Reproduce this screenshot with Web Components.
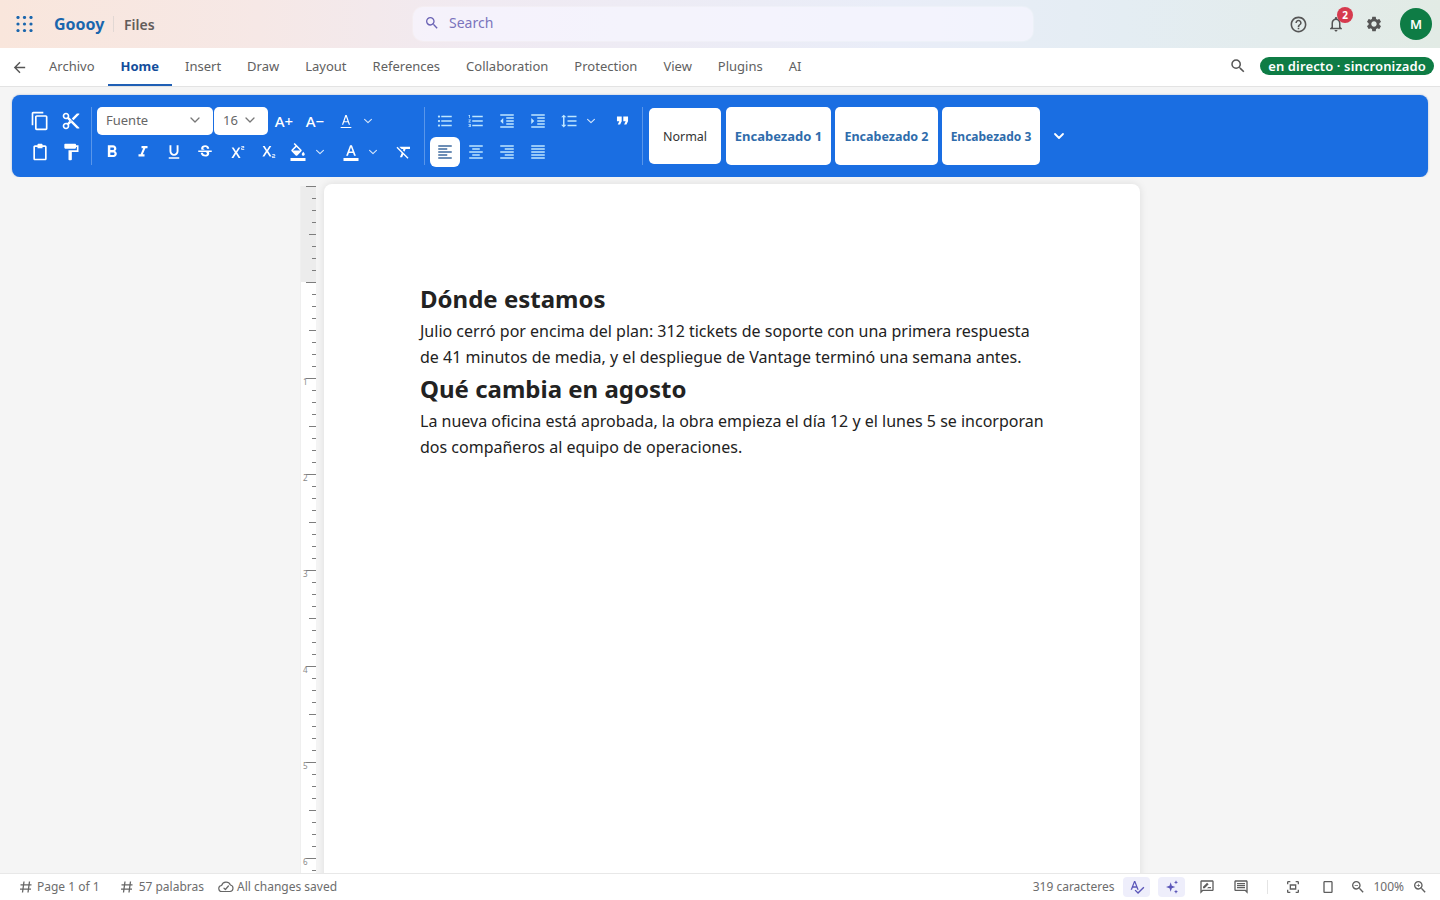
<!DOCTYPE html>
<html lang="es">
<head>
<meta charset="utf-8">
<title>Goooy Files</title>
<style>
html,body{margin:0;height:100%;overflow:hidden}
body{font-family:"Noto Sans","Open Sans",sans-serif;background:#f5f5f5;color:#222}
app-shell{height:900px}
</style>
</head>
<body>
<app-shell>
  <top-bar slot="top"></top-bar>
  <tab-bar slot="top"></tab-bar>
  <format-ribbon slot="top"></format-ribbon>
  <doc-ruler slot="ruler"></doc-ruler>
  <doc-page slot="page">
    <h1>Dónde estamos</h1>
    <p>Julio cerró por encima del plan: 312 tickets de soporte con una primera respuesta de 41 minutos de media, y el despliegue de Vantage terminó una semana antes.</p>
    <h1>Qué cambia en agosto</h1>
    <p>La nueva oficina está aprobada, la obra empieza el día 12 y el lunes 5 se incorporan dos compañeros al equipo de operaciones.</p>
  </doc-page>
  <status-bar slot="bottom"></status-bar>
</app-shell>
<script>
const P={
search:'M15.5 14h-.79l-.28-.27A6.471 6.471 0 0 0 16 9.5 6.5 6.5 0 1 0 9.5 16c1.61 0 3.09-.59 4.23-1.57l.27.28v.79l5 4.99L20.49 19l-4.99-5zm-6 0C7.01 14 5 11.99 5 9.5S7.01 5 9.5 5 14 7.01 14 9.5 11.99 14 9.5 14z',
help:'M11 18h2v-2h-2v2zm1-16C6.48 2 2 6.48 2 12s4.48 10 10 10 10-4.48 10-10S17.52 2 12 2zm0 18c-4.41 0-8-3.59-8-8s3.59-8 8-8 8 3.59 8 8-3.59 8-8 8zm0-14c-2.21 0-4 1.79-4 4h2c0-1.1.9-2 2-2s2 .9 2 2c0 2-3 1.75-3 5h2c0-2.25 3-2.5 3-5 0-2.21-1.79-4-4-4z',
bell:'M12 22c1.1 0 2-.9 2-2h-4c0 1.1.9 2 2 2zm6-6v-5c0-3.07-1.63-5.64-4.5-6.32V4c0-.83-.67-1.5-1.5-1.5s-1.5.67-1.5 1.5v.68C7.64 5.36 6 7.92 6 11v5l-2 2v1h16v-1l-2-2zm-2 1H8v-6c0-2.48 1.51-4.5 4-4.5s4 2.02 4 4.5v6z',
gear:'M19.14 12.94c.04-.3.06-.61.06-.94 0-.32-.02-.64-.07-.94l2.03-1.58c.18-.14.23-.41.12-.61l-1.92-3.32c-.12-.22-.37-.29-.59-.22l-2.39.96c-.5-.38-1.03-.7-1.62-.94l-.36-2.54c-.04-.24-.24-.41-.48-.41h-3.84c-.24 0-.43.17-.47.41l-.36 2.54c-.59.24-1.13.57-1.62.94l-2.39-.96c-.22-.08-.47 0-.59.22L2.74 8.87c-.12.21-.08.47.12.61l2.03 1.58c-.05.3-.09.63-.09.94s.02.64.07.94l-2.03 1.58c-.18.14-.23.41-.12.61l1.92 3.32c.12.22.37.29.59.22l2.39-.96c.5.38 1.03.7 1.62.94l.36 2.54c.05.24.24.41.48.41h3.84c.24 0 .44-.17.47-.41l.36-2.54c.59-.24 1.13-.56 1.62-.94l2.39.96c.22.08.47 0 .59-.22l1.92-3.32c.12-.22.07-.47-.12-.61l-2.01-1.58zM12 15.6c-1.98 0-3.6-1.62-3.6-3.6s1.62-3.6 3.6-3.6 3.6 1.62 3.6 3.6-1.62 3.6-3.6 3.6z',
back:'M20 11H7.83l5.59-5.59L12 4l-8 8 8 8 1.41-1.41L7.83 13H20v-2z',
copy:'M16 1H4c-1.1 0-2 .9-2 2v14h2V3h12V1zm3 4H8c-1.1 0-2 .9-2 2v14c0 1.1.9 2 2 2h11c1.1 0 2-.9 2-2V7c0-1.1-.9-2-2-2zm0 16H8V7h11v14z',
cut:'M9.64 7.64c.23-.5.36-1.05.36-1.64 0-2.21-1.79-4-4-4S2 3.79 2 6s1.79 4 4 4c.59 0 1.14-.13 1.64-.36L10 12l-2.36 2.36C7.14 14.13 6.59 14 6 14c-2.21 0-4 1.79-4 4s1.79 4 4 4 4-1.79 4-4c0-.59-.13-1.14-.36-1.64L12 14l7 7h3v-1L9.64 7.64zM6 8c-1.1 0-2-.89-2-2s.9-2 2-2 2 .89 2 2-.9 2-2 2zm0 12c-1.1 0-2-.89-2-2s.9-2 2-2 2 .89 2 2-.9 2-2 2zm6-7.5c-.28 0-.5-.22-.5-.5s.22-.5.5-.5.5.22.5.5-.22.5-.5.5zM19 3l-6 6 2 2 7-7V3h-3z',
paste:'M6 4h3V3c0-.6.4-1 1-1h4c.6 0 1 .4 1 1v1h3c1.1 0 2 .9 2 2v14c0 1.1-.9 2-2 2H6c-1.1 0-2-.9-2-2V6c0-1.1.9-2 2-2zm0 2v14h12V6h-3v1.5H9V6H6z',
paint:'M18 4V3c0-.55-.45-1-1-1H5c-.55 0-1 .45-1 1v4c0 .55.45 1 1 1h12c.55 0 1-.45 1-1V6h1v4H9v11c0 .55.45 1 1 1h2c.55 0 1-.45 1-1v-9h8V4h-3z',
bold:'M15.6 10.79c.97-.67 1.65-1.77 1.65-2.79 0-2.26-1.75-4-4-4H7v14h7.04c2.09 0 3.71-1.7 3.71-3.79 0-1.52-.86-2.82-2.15-3.42zM10 6.5h3c.83 0 1.5.67 1.5 1.5s-.67 1.5-1.5 1.5h-3v-3zm3.5 9H10v-3h3.5c.83 0 1.5.67 1.5 1.5s-.67 1.5-1.5 1.5z',
italic:'M10 4v3h2.21l-3.42 8H6v3h8v-3h-2.21l3.42-8H18V4z',
under:'M12 17c3.31 0 6-2.69 6-6V3h-2.5v8c0 1.93-1.57 3.5-3.5 3.5S8.5 12.93 8.5 11V3H6v8c0 3.31 2.69 6 6 6zm-7 2v2h14v-2H5z',
strike:'M6.85 7.08C6.85 4.37 9.45 3 12.24 3c1.64 0 3 .49 3.9 1.28.77.65 1.46 1.73 1.46 3.24h-3.01c0-.31-.05-.59-.15-.85-.29-.86-1.2-1.28-2.25-1.28-1.86 0-2.34 1.02-2.34 1.7 0 .48.25.88.74 1.21.38.25.77.48 1.41.7H7.39c-.21-.34-.54-.89-.54-1.92zM21 12v-2H3v2h9.62c1.15.45 1.96.75 1.96 1.97 0 1-.81 1.67-2.28 1.67-1.54 0-2.93-.54-2.93-2.51H6.4c0 .55.08 1.13.24 1.58.81 2.29 3.29 3.3 5.67 3.3 2.27 0 5.3-.89 5.3-4.05 0-.3-.01-1.16-.48-1.96H21z',
sup:'M22 7h-2v1h3v1h-4V7c0-.55.45-1 1-1h2V5h-3V4h3c.55 0 1 .45 1 1v1c0 .55-.45 1-1 1zM5.88 20h2.66l3.4-5.42h.12l3.4 5.42h2.66l-4.65-7.27L17.81 6h-2.68l-3.07 4.99h-.12L8.85 6H6.19l4.32 6.73L5.88 20z',
sub:'M22 18h-2v1h3v1h-4v-2c0-.55.45-1 1-1h2v-1h-3v-1h3c.55 0 1 .45 1 1v1c0 .55-.45 1-1 1zM5.88 18h2.66l3.4-5.42h.12l3.4 5.42h2.66l-4.65-7.27L17.81 4h-2.68l-3.07 4.99h-.12L8.85 4H6.19l4.32 6.73L5.88 18z',
color:'M2 20h20v4H2v-4zm3.49-3h2.42l1.27-3.58h5.65L16.09 17h2.42L13.25 3h-2.5L5.49 17zm4.42-5.61 2.03-5.79h.12l2.03 5.79H9.91z',
colorThin:'M4 21h16v1.6H4V21zm1.9-3.5h1.9l1.3-3.6h5.8l1.3 3.6h1.9L13 3h-2L5.9 17.5zm3.8-5.3L12 5.6l2.3 6.6H9.7z',
fill:'M16.56 8.94 7.62 0 6.21 1.41l2.38 2.38-5.15 5.15c-.59.59-.59 1.54 0 2.12l5.5 5.5c.29.29.68.44 1.06.44s.77-.15 1.06-.44l5.5-5.5c.59-.58.59-1.53 0-2.12zM5.21 10 10 5.21 14.79 10H5.21zM19 11.5s-2 2.17-2 3.5c0 1.1.9 2 2 2s2-.9 2-2c0-1.33-2-3.5-2-3.5zM2 20h20v4H2v-4z',
clear:'M3.27 5 2 6.27l6.97 6.97L6.5 19h3l1.57-3.66L16.73 21 18 19.73 3.55 5.27 3.27 5zM6 5v.18L8.82 8h2.4l-.72 1.68 2.1 2.1L14.21 8H20V5H6z',
bul:'M4 10.5c-.83 0-1.5.67-1.5 1.5s.67 1.5 1.5 1.5 1.5-.67 1.5-1.5-.67-1.5-1.5-1.5zm0-6c-.83 0-1.5.67-1.5 1.5S3.17 7.5 4 7.5 5.5 6.83 5.5 6 4.83 4.5 4 4.5zm0 12c-.83 0-1.5.68-1.5 1.5s.68 1.5 1.5 1.5 1.5-.68 1.5-1.5-.67-1.5-1.5-1.5zM7 19h14v-2H7v2zm0-6h14v-2H7v2zm0-8v2h14V5H7z',
num:'M2 17h2v.5H3v1h1v.5H2v1h3v-4H2v1zm1-9h1V4H2v1h1v3zm-1 3h1.8L2 13.1v.9h3v-1H3.2L5 10.9V10H2v1zm5-6v2h14V5H7zm0 14h14v-2H7v2zm0-6h14v-2H7v2z',
indL:'M11 17h10v-2H11v2zm-8-5 4 4V8l-4 4zm0 9h18v-2H3v2zM3 3v2h18V3H3zm8 6h10V7H11v2zm0 4h10v-2H11v2z',
indR:'M3 21h18v-2H3v2zM3 8v8l4-4-4-4zm8 9h10v-2H11v2zM3 3v2h18V3H3zm8 6h10V7H11v2zm0 4h10v-2H11v2z',
line:'M6 7h2.5L5 3.5 1.5 7H4v10H1.5L5 20.5 8.5 17H6V7zm4-2v2h12V5H10zm0 14h12v-2H10v2zm0-6h12v-2H10v2z',
quote:'M6 17h3l2-4V7H5v6h3zm8 0h3l2-4V7h-6v6h3z',
aL:'M15 15H3v2h12v-2zm0-8H3v2h12V7zM3 13h18v-2H3v2zm0 8h18v-2H3v2zM3 3v2h18V3H3z',
aC:'M7 15v2h10v-2H7zm-4 6h18v-2H3v2zm0-8h18v-2H3v2zm4-6v2h10V7H7zM3 3v2h18V3H3z',
aR:'M3 21h18v-2H3v2zm6-4h12v-2H9v2zm-6-4h18v-2H3v2zm6-4h12V7H9v2zM3 3v2h18V3H3z',
aJ:'M3 21h18v-2H3v2zm0-4h18v-2H3v2zm0-4h18v-2H3v2zm0-4h18V7H3v2zm0-6v2h18V3H3z',
spell:'M12.45 16h2.09L9.43 3H7.57L2.46 16h2.09l1.12-3h5.64l1.14 3zm-6.02-5L8.5 5.48 10.57 11H6.43zm15.16.59-8.09 8.09L9.83 16l-1.41 1.41 5.09 5.09L23 13l-1.41-1.41z',
spark:'M10 5l1.7 5.3L17 12l-5.3 1.7L10 19l-1.7-5.3L3 12l5.3-1.7zM18 2l.9 2.1L21 5l-2.1.9L18 8l-.9-2.1L15 5l2.1-.9zM18 16l.9 2.1 2.1.9-2.1.9L18 22l-.9-2.1L15 19l2.1-.9z',
review:'M20 2H4c-1.1 0-2 .9-2 2v18l4-4h14c1.1 0 2-.9 2-2V4c0-1.1-.9-2-2-2zm0 14H5.2L4 17.2V4h16v12zM6 14h2.5l6-6-2.4-2.4-6.1 6V14zm6 0h6v-2h-4z',
comment:'M21.99 4c0-1.1-.89-2-1.99-2H4c-1.1 0-2 .9-2 2v12c0 1.1.9 2 2 2h14l4 4-.01-18zM20 4v13.17L18.83 16H4V4h16zM6 12h12v2H6zm0-3h12v2H6zm0-3h12v2H6z',
fit:'M3 8V5c0-1.1.9-2 2-2h3v2H5v3H3zm13-5h3c1.1 0 2 .9 2 2v3h-2V5h-3V3zM3 16h2v3h3v2H5c-1.1 0-2-.9-2-2v-3zm16 0h2v3c0 1.1-.9 2-2 2h-3v-2h3v-3zM7 8h10v8H7V8zm2 2v4h6v-4H9z',
page:'M7 3h10c1.1 0 2 .9 2 2v14c0 1.1-.9 2-2 2H7c-1.1 0-2-.9-2-2V5c0-1.1.9-2 2-2zm0 2v14h10V5H7z',
zoomOut:'M15.5 14h-.79l-.28-.27A6.471 6.471 0 0 0 16 9.5 6.5 6.5 0 1 0 9.5 16c1.61 0 3.09-.59 4.23-1.57l.27.28v.79l5 4.99L20.49 19l-4.99-5zm-6 0C7.01 14 5 11.99 5 9.5S7.01 5 9.5 5 14 7.01 14 9.5 11.99 14 9.5 14zM7 9h5v1H7z',
zoomIn:'M15.5 14h-.79l-.28-.27A6.471 6.471 0 0 0 16 9.5 6.5 6.5 0 1 0 9.5 16c1.61 0 3.09-.59 4.23-1.57l.27.28v.79l5 4.99L20.49 19l-4.99-5zm-6 0C7.01 14 5 11.99 5 9.5S7.01 5 9.5 5 14 7.01 14 9.5 11.99 14 9.5 14zM12 10h-2v2H9v-2H7V9h2V7h1v2h2v1z'
};
const ico=(n,s=20,c='currentColor')=>`<svg width="${s}" height="${s}" viewBox="0 0 24 24" fill="${c}" style="display:block;flex:none"><path d="${P[n]}"/></svg>`;
const chev=(s=14,c='currentColor',w=1.6)=>`<svg width="${s}" height="${s}" viewBox="0 0 14 14" fill="none" stroke="${c}" stroke-width="${w}" stroke-linecap="round" stroke-linejoin="round" style="display:block;flex:none"><path d="M3 5l4 4 4-4"/></svg>`;
const base=':host{display:block;box-sizing:border-box;font-family:"Noto Sans","Open Sans",sans-serif}*{box-sizing:border-box}';
class Base extends HTMLElement{
  constructor(){super();this.attachShadow({mode:'open'}).innerHTML='<style>'+base+this.css()+'</style>'+this.html();}
  css(){return ''} html(){return ''}
}
customElements.define('app-shell',class extends Base{
  css(){return ':host{display:flex;flex-direction:column;height:900px;overflow:hidden}.main{flex:1;min-height:0;overflow:hidden;display:flex;justify-content:center;align-items:flex-start;gap:8px;padding-top:7px;background:#f5f5f5}.bottom{flex:none}'}
  html(){return '<slot name="top"></slot><div class="main"><slot name="ruler"></slot><slot name="page"></slot></div><div class="bottom"><slot name="bottom"></slot></div>'}
});
customElements.define('top-bar',class extends Base{
  css(){return `:host{height:48px;background:linear-gradient(90deg,#f9e6dc 0%,#f6e8e6 18%,#f0eaf2 34%,#e9edf8 62%,#e4edf3 78%,#e2ebe5 100%)}
  .r{display:flex;align-items:center;height:48px;padding-left:16px}
  .brand{font-size:16px;font-weight:700;color:#1a66ad;margin-left:21px;width:59px;line-height:48px}
  .div{width:1px;height:16px;background:#e2d8d4}
  .files{font-size:14px;font-weight:600;color:#625c5a;margin-left:10px;width:289px}
  .search{width:620px;height:34px;border-radius:10px;background:rgba(247,245,255,.72);box-shadow:0 0 2px rgba(255,255,255,.8);display:flex;align-items:center;gap:9px;padding:0 0 3px 11px;color:#6a62b4;font-size:14px}
  .search span{color:#7b74bd}
  .right{margin-left:auto;display:flex;align-items:center;padding-right:8px;color:#555}
  .ib{width:38px;height:38px;display:flex;align-items:center;justify-content:center;position:relative}
  .badge{position:absolute;left:20px;top:2px;width:16px;height:16px;border-radius:50%;background:#d63a4e;color:#fff;font-size:10px;font-weight:700;display:flex;align-items:center;justify-content:center}
  .av{width:32px;height:32px;border-radius:50%;background:#0e7c45;color:#fff;font-size:13px;font-weight:600;display:flex;align-items:center;justify-content:center;margin-left:7px}`}
  html(){
    let d='';for(let y of [1.5,8,14.5])for(let x of [1.5,8,14.5])d+=`<circle cx="${x}" cy="${y}" r="1.6"/>`;
    return `<div class="r"><svg width="17" height="16" viewBox="0 0 16 16" fill="#1a66ad">${d}</svg><span class="brand">Goooy</span><span class="div"></span><span class="files">Files</span>
    <div class="search">${ico('search',16)}<span>Search</span></div>
    <div class="right"><div class="ib">${ico('help',19)}</div><div class="ib">${ico('bell',18)}<span class="badge">2</span></div><div class="ib">${ico('gear',18)}</div><div class="av">M</div></div></div>`}
});
customElements.define('tab-bar',class extends Base{
  css(){return `:host{height:39px;background:#fff;border-bottom:1px solid #e3e3e3}
  .r{display:flex;align-items:stretch;height:38px}
  .bk{width:36px;display:flex;align-items:center;justify-content:center;padding-left:3px;color:#555}
  .t{padding:0 13px;font-size:13px;line-height:37px;color:#616161;position:relative;white-space:nowrap}
  .t.on{color:#124d9b;font-weight:700}
  .t.on::after{content:"";position:absolute;left:0;right:0;bottom:0;height:2px;background:#1f5fb5}
  .end{margin-left:auto;display:flex;align-items:center;padding:0 6px 2px 0;color:#555}
  .pill{margin-left:13px;height:18px;border-radius:9px;background:#0e7c45;color:#fff;font-size:13px;font-weight:600;letter-spacing:.13px;line-height:18px;padding:0 8px;white-space:nowrap}`}
  html(){const tabs=['Archivo','Home','Insert','Draw','Layout','References','Collaboration','Protection','View','Plugins','AI'];
    return `<div class="r"><div class="bk">${ico('back',17)}</div>${tabs.map(t=>`<span class="t${t=='Home'?' on':''}">${t}</span>`).join('')}<div class="end">${ico('search',18)}<span class="pill">en directo · sincronizado</span></div></div>`}
});
customElements.define('rb-btn',class extends Base{
  css(){return ':host{display:flex;width:30px;height:30px;align-items:center;justify-content:center;flex:none;color:#fff;border-radius:6px}:host([active]){background:#fff;color:#3e6a9e}:host([soft]){color:#bfe6ff}:host([sm]){width:12px}:host(.txt){font-size:15px;font-weight:500}'}
  html(){return '<slot></slot>'}
  connectedCallback(){const n=this.getAttribute('i');if(n&&!this.dataset.d){this.dataset.d=1;this.shadowRoot.appendChild(document.createRange().createContextualFragment(ico(n,+this.getAttribute('s')||18)));}}
});
customElements.define('rb-select',class extends Base{
  css(){return ':host{display:flex;align-items:center;justify-content:space-between;height:28px;background:#fff;border-radius:5px;color:#666;font-size:13px;padding:0 11px 1px 9px;flex:none}'}
  html(){return `<slot></slot>${chev(14,'#777',1.3)}`}
});
customElements.define('style-chip',class extends Base{
  css(){return ':host{display:flex;align-items:center;justify-content:center;height:58px;background:#fff;border-radius:5px;color:#2f6cab;font-size:12.5px;font-weight:700;flex:none;white-space:nowrap}:host([plain]){height:56px;color:#333;font-weight:400;font-size:12.5px}'}
  html(){return '<slot></slot>'}
});
customElements.define('format-ribbon',class extends Base{
  css(){return `:host{height:82px;margin:8px 12px 0;background:#1a6ee2;border-radius:8px;box-shadow:0 0 2px rgba(30,80,160,.4)}
  .r{display:flex;align-items:center;height:82px;padding-left:13px}
  .g{display:flex;flex-direction:column;gap:1px}
  .row{display:flex;gap:1px;align-items:center;height:30px}
  .d{width:1px;height:58px;background:rgba(255,255,255,.28);flex:none;margin:0 5px}
  .st{display:flex;align-items:center;margin-left:1px}
  .tx{color:#fff;font-size:15px;font-weight:500;line-height:30px}
  `}
  html(){const b=(i,x='',s=18)=>`<rb-btn i="${i}" s="${s}" ${x}></rb-btn>`;
    const c=(x='')=>`<rb-btn sm style="color:#d5e6fb">${chev(12,'currentColor',1.3)}</rb-btn>`;
    return `<div class="r">
    <div class="g"><div class="row">${b('copy','',20)}${b('cut','',20)}</div><div class="row">${b('paste','',20)}${b('paint','',20)}</div></div>
    <div class="d"></div>
    <div class="g">
      <div class="row"><rb-select style="width:116px">Fuente</rb-select><rb-select style="width:54px">16</rb-select>
        <rb-btn class="txt"><span class="tx">A+</span></rb-btn><rb-btn class="txt"><span class="tx">A−</span></rb-btn>${b('colorThin','',16)}${c()}</div>
      <div class="row">${b('bold','',20)}${b('italic','',18)}${b('under','',18)}${b('strike','',18)}${b('sup','',18)}${b('sub','',18)}${b('fill','',18)}${c()}<span style="width:8px"></span>${b('color','',18)}${c()}<span style="width:8px"></span>${b('clear','',18)}</div>
    </div>
    <div class="d"></div>
    <div class="g">
      <div class="row">${b('bul','soft',18)}${b('num','soft',18)}${b('indL','soft',18)}${b('indR','soft',18)}${b('line','soft',18)}${c()}<span style="width:8px"></span>${b('quote','',19)}</div>
      <div class="row">${b('aL','active',18)}${b('aC','soft',18)}${b('aR','soft',18)}${b('aJ','soft',18)}</div>
    </div>
    <div class="d"></div>
    <div class="st" style="gap:5px"><style-chip plain style="width:72px">Normal</style-chip><style-chip style="width:105px;font-size:13px">Encabezado 1</style-chip><style-chip style="width:103px;margin-left:-1px">Encabezado 2</style-chip><style-chip style="width:98px;margin-left:-1px;font-size:12px">Encabezado 3</style-chip></div>
    <rb-btn style="margin-left:4px">${chev(14,'#fff',1.8)}</rb-btn>
    </div>`}
});
customElements.define('doc-ruler',class extends Base{
  css(){return ':host{width:15px;height:700px;flex:none;background:#fff;margin:2px 0 0 1px;box-shadow:-1px 0 0 #efefef}svg{display:block}'}
  html(){let s='';
    s+='<rect x="0" y="0" width="15" height="96" fill="#ececec"/>';
    for(let i=0;i<59;i++){const y=i*12+.5;const m=i%8==0?10:(i%4==0?7:4);s+=`<line x1="${15-m}" x2="15" y1="${y}" y2="${y}" stroke="#7d7d7d"/>`;
      if(i%8==0&&i>=16){s+=`<text x="2" y="${y+6}" font-size="8" fill="#888" font-family="Noto Sans">${i/8-1}</text>`;}}
    return `<svg width="15" height="700" viewBox="0 0 15 700">${s}</svg>`}
});
customElements.define('doc-page',class extends Base{
  css(){return `:host{width:816px;height:800px;flex:none;background:#fff;border-radius:8px 8px 0 0;padding:96px;box-shadow:0 0 8px rgba(0,0,0,.1);color:#222}
  ::slotted(h1){margin:0;font-size:24px;line-height:38px;font-weight:700;color:#222}
  ::slotted(p){margin:0;font-size:16px;line-height:26px;color:#222}`}
  html(){return '<slot></slot>'}
});
customElements.define('status-bar',class extends Base{
  css(){return `:host{height:27px;background:#fff;border-top:1px solid #e8e8e8;color:#6d6d6d;font-size:12px}
  .r{display:flex;align-items:center;height:26px;padding:0 12px 1px 19px;white-space:nowrap}
  .i{display:flex;align-items:center;gap:5px}
  .s{margin-left:auto}
  .hb{width:27px;height:20px;border-radius:4px;background:#eeeefb;color:#5a55b8;display:flex;align-items:center;justify-content:center}
  .ic{display:flex;align-items:center;justify-content:center;width:16px;color:#5f5f5f}
  .dv{width:1px;height:14px;background:#e4e4e4}`}
  html(){const h='<svg width="14" height="14" viewBox="0 0 14 14" fill="none" stroke="#666" stroke-width="1.3" style="display:block;flex:none"><path d="M5 1.5 3.5 12.5M10.5 1.5 9 12.5M1.5 4.8h11M1 9.2h11"/></svg>';
    const cloud='<svg width="16" height="14" viewBox="0 0 16 14" fill="none" stroke="#666" stroke-width="1.2" stroke-linecap="round" stroke-linejoin="round" style="display:block;flex:none"><path d="M4 11.5a3 3 0 0 1-.4-6A4.7 4.7 0 0 1 12.4 5a3.3 3.3 0 0 1-.4 6.5z"/><path d="M6 8.2l1.4 1.3L10.4 6"/></svg>';
    return `<div class="r"><span class="i" style="gap:4px">${h}<span>Page 1 of 1</span></span><span class="i" style="margin-left:20px">${h}<span>57 palabras</span></span><span class="i" style="margin-left:14px;gap:3px">${cloud}<span>All changes saved</span></span>
    <span class="s">319 caracteres</span><span class="hb" style="margin-left:9px">${ico('spell',16)}</span><span class="hb" style="margin-left:8px">${ico('spark',16)}</span><span class="ic" style="margin-left:14px">${ico('review',16)}</span><span class="ic" style="margin-left:18px">${ico('comment',16)}</span><span class="dv" style="margin-left:18px"></span><span class="ic" style="margin-left:17px">${ico('fit',16)}</span><span class="ic" style="margin-left:19px">${ico('page',16)}</span><span class="ic" style="margin-left:14px">${ico('zoomOut',16)}</span><span style="margin-left:7px">100%</span><span class="ic" style="margin-left:8px">${ico('zoomIn',16)}</span></div>`}
});
</script>
</body>
</html>
